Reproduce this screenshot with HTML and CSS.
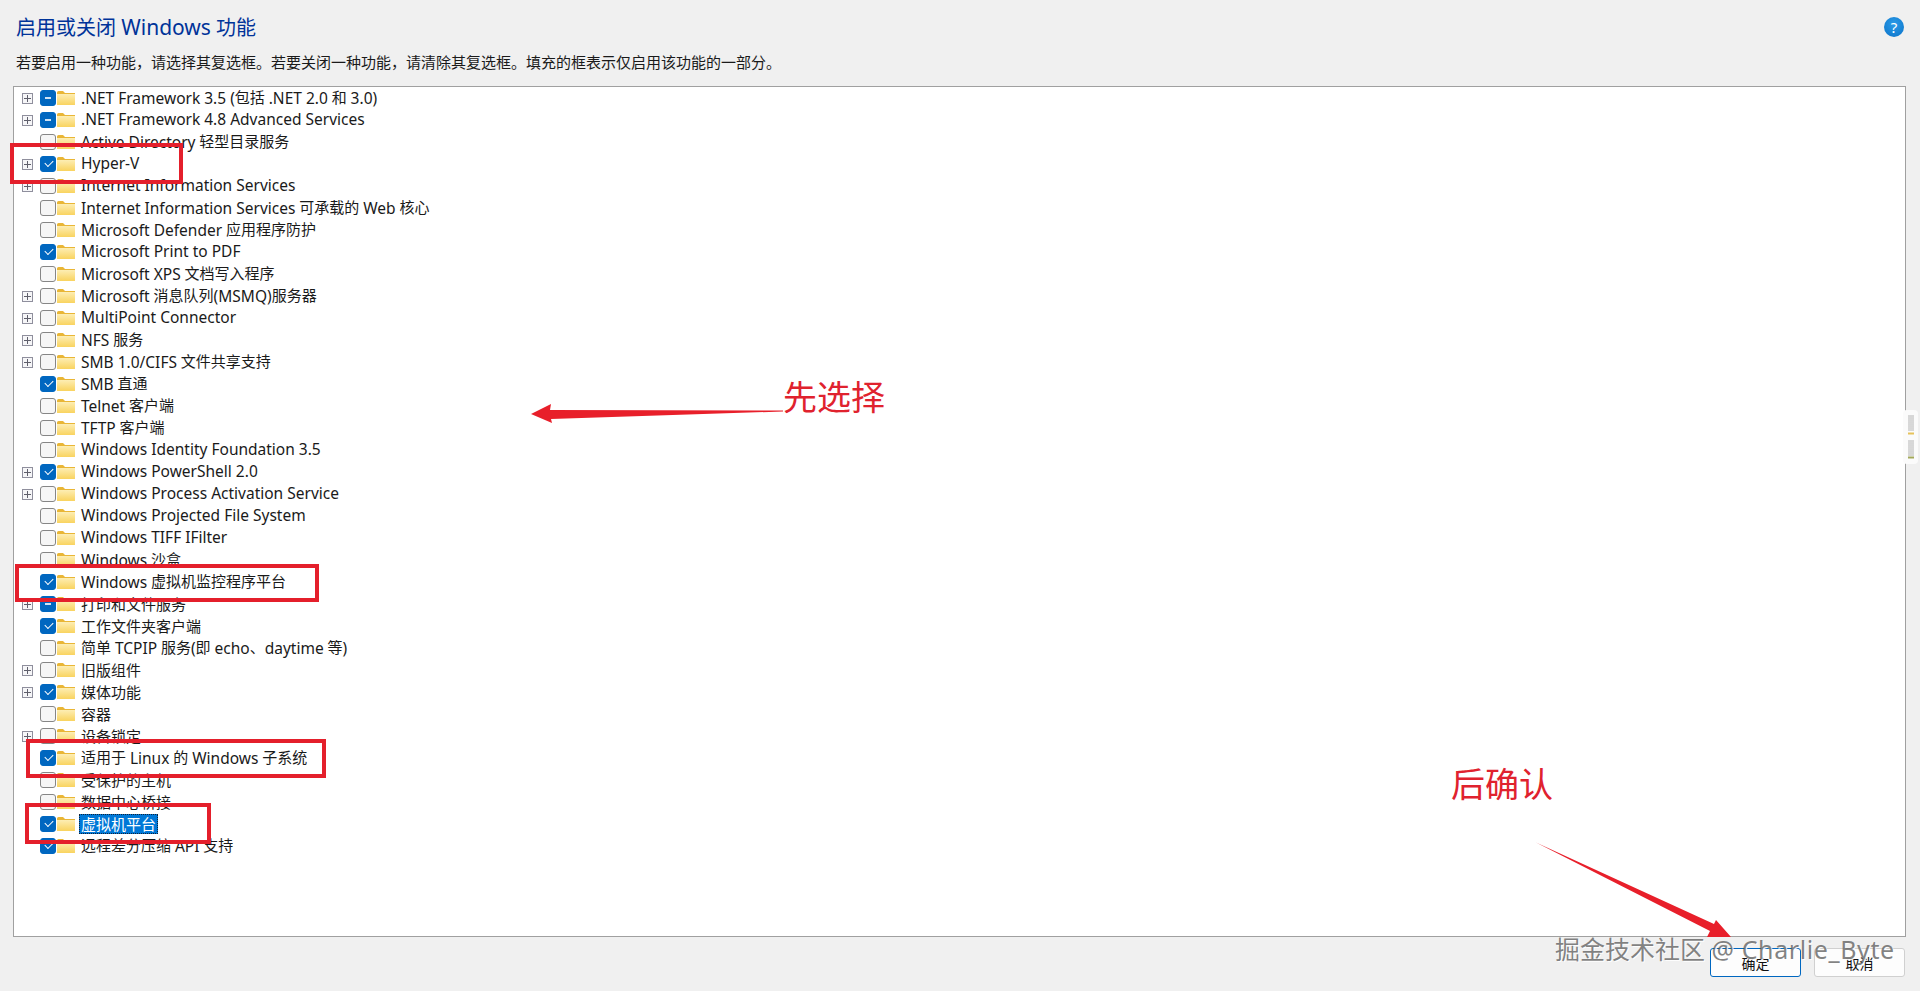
FILE: index.html
```html
<!DOCTYPE html>
<html lang="zh-CN">
<head>
  <meta charset="UTF-8">
  <title>启用或关闭 Windows 功能</title>
  <link rel="stylesheet" href="styles.css">
</head>
<body>
  <svg class="defs" width="0" height="0">
    <defs>
      <linearGradient id="folderFill" x1="0" y1="0" x2="0" y2="1">
        <stop offset="0" stop-color="#fdeeb4"/>
        <stop offset="1" stop-color="#f9d35f"/>
      </linearGradient>
      <symbol id="folder" viewBox="0 0 18 16">
        <path d="M0 2.500Q0 1 1.500 1H6L8 3H18V5H0Z" fill="#e9b636"/>
        <path d="M0 4H18V14.500Q18 15 17.500 15H.5Q0 15 0 14.500Z" fill="url(#folderFill)"/>
      </symbol>
    </defs>
  </svg>

  <header class="top">
    <div class="title-bar">
      <h1>启用或关闭 <span class="en">Windows</span> 功能</h1>
      <span class="help">?</span>
    </div>
    <p class="hint">若要启用一种功能，请选择其复选框。若要关闭一种功能，请清除其复选框。填充的框表示仅启用该功能的一部分。</p>
  </header>

  <ul class="tree">
    <li class="row"><i class="exp"></i><i class="box part"></i><svg class="fold"><use href="#folder"/></svg><span class="label"><span class="en">.NET Framework 3.5 (</span>包括 <span class="en">.NET 2.0</span> 和 <span class="en">3.0)</span></span></li>
    <li class="row"><i class="exp"></i><i class="box part"></i><svg class="fold"><use href="#folder"/></svg><span class="label"><span class="en">.NET Framework 4.8 Advanced Services</span></span></li>
    <li class="row"><i class="noexp"></i><i class="box"></i><svg class="fold"><use href="#folder"/></svg><span class="label"><span class="en">Active Directory</span> 轻型目录服务</span></li>
    <li class="row"><i class="exp"></i><i class="box on"></i><svg class="fold"><use href="#folder"/></svg><span class="label"><span class="en">Hyper-V</span></span></li>
    <li class="row"><i class="exp"></i><i class="box"></i><svg class="fold"><use href="#folder"/></svg><span class="label"><span class="en">Internet Information Services</span></span></li>
    <li class="row"><i class="noexp"></i><i class="box"></i><svg class="fold"><use href="#folder"/></svg><span class="label"><span class="en">Internet Information Services</span> 可承载的 <span class="en">Web</span> 核心</span></li>
    <li class="row"><i class="noexp"></i><i class="box"></i><svg class="fold"><use href="#folder"/></svg><span class="label"><span class="en">Microsoft Defender</span> 应用程序防护</span></li>
    <li class="row"><i class="noexp"></i><i class="box on"></i><svg class="fold"><use href="#folder"/></svg><span class="label"><span class="en">Microsoft Print to PDF</span></span></li>
    <li class="row"><i class="noexp"></i><i class="box"></i><svg class="fold"><use href="#folder"/></svg><span class="label"><span class="en">Microsoft XPS</span> 文档写入程序</span></li>
    <li class="row"><i class="exp"></i><i class="box"></i><svg class="fold"><use href="#folder"/></svg><span class="label"><span class="en">Microsoft</span> 消息队列<span class="en">(MSMQ)</span>服务器</span></li>
    <li class="row"><i class="exp"></i><i class="box"></i><svg class="fold"><use href="#folder"/></svg><span class="label"><span class="en">MultiPoint Connector</span></span></li>
    <li class="row"><i class="exp"></i><i class="box"></i><svg class="fold"><use href="#folder"/></svg><span class="label"><span class="en">NFS</span> 服务</span></li>
    <li class="row"><i class="exp"></i><i class="box"></i><svg class="fold"><use href="#folder"/></svg><span class="label"><span class="en">SMB 1.0/CIFS</span> 文件共享支持</span></li>
    <li class="row"><i class="noexp"></i><i class="box on"></i><svg class="fold"><use href="#folder"/></svg><span class="label"><span class="en">SMB</span> 直通</span></li>
    <li class="row"><i class="noexp"></i><i class="box"></i><svg class="fold"><use href="#folder"/></svg><span class="label"><span class="en">Telnet</span> 客户端</span></li>
    <li class="row"><i class="noexp"></i><i class="box"></i><svg class="fold"><use href="#folder"/></svg><span class="label"><span class="en">TFTP</span> 客户端</span></li>
    <li class="row"><i class="noexp"></i><i class="box"></i><svg class="fold"><use href="#folder"/></svg><span class="label"><span class="en">Windows Identity Foundation 3.5</span></span></li>
    <li class="row"><i class="exp"></i><i class="box on"></i><svg class="fold"><use href="#folder"/></svg><span class="label"><span class="en">Windows PowerShell 2.0</span></span></li>
    <li class="row"><i class="exp"></i><i class="box"></i><svg class="fold"><use href="#folder"/></svg><span class="label"><span class="en">Windows Process Activation Service</span></span></li>
    <li class="row"><i class="noexp"></i><i class="box"></i><svg class="fold"><use href="#folder"/></svg><span class="label"><span class="en">Windows Projected File System</span></span></li>
    <li class="row"><i class="noexp"></i><i class="box"></i><svg class="fold"><use href="#folder"/></svg><span class="label"><span class="en">Windows TIFF IFilter</span></span></li>
    <li class="row"><i class="noexp"></i><i class="box"></i><svg class="fold"><use href="#folder"/></svg><span class="label"><span class="en">Windows</span> 沙盒</span></li>
    <li class="row"><i class="noexp"></i><i class="box on"></i><svg class="fold"><use href="#folder"/></svg><span class="label"><span class="en">Windows</span> 虚拟机监控程序平台</span></li>
    <li class="row"><i class="exp"></i><i class="box part"></i><svg class="fold"><use href="#folder"/></svg><span class="label">打印和文件服务</span></li>
    <li class="row"><i class="noexp"></i><i class="box on"></i><svg class="fold"><use href="#folder"/></svg><span class="label">工作文件夹客户端</span></li>
    <li class="row"><i class="noexp"></i><i class="box"></i><svg class="fold"><use href="#folder"/></svg><span class="label">简单 <span class="en">TCPIP</span> 服务<span class="en">(</span>即 <span class="en">echo</span>、<span class="en">daytime</span> 等<span class="en">)</span></span></li>
    <li class="row"><i class="exp"></i><i class="box"></i><svg class="fold"><use href="#folder"/></svg><span class="label">旧版组件</span></li>
    <li class="row"><i class="exp"></i><i class="box on"></i><svg class="fold"><use href="#folder"/></svg><span class="label">媒体功能</span></li>
    <li class="row"><i class="noexp"></i><i class="box"></i><svg class="fold"><use href="#folder"/></svg><span class="label">容器</span></li>
    <li class="row"><i class="exp"></i><i class="box"></i><svg class="fold"><use href="#folder"/></svg><span class="label">设备锁定</span></li>
    <li class="row"><i class="noexp"></i><i class="box on"></i><svg class="fold"><use href="#folder"/></svg><span class="label">适用于 <span class="en">Linux</span> 的 <span class="en">Windows</span> 子系统</span></li>
    <li class="row"><i class="noexp"></i><i class="box"></i><svg class="fold"><use href="#folder"/></svg><span class="label">受保护的主机</span></li>
    <li class="row"><i class="noexp"></i><i class="box"></i><svg class="fold"><use href="#folder"/></svg><span class="label">数据中心桥接</span></li>
    <li class="row"><i class="noexp"></i><i class="box on"></i><svg class="fold"><use href="#folder"/></svg><span class="label selected">虚拟机平台</span></li>
    <li class="row"><i class="noexp"></i><i class="box on"></i><svg class="fold"><use href="#folder"/></svg><span class="label">远程差分压缩 <span class="en">API</span> 支持</span></li>
  </ul>

  <footer class="actions">
    <button class="btn btn-ok">确定</button>
    <button class="btn">取消</button>
  </footer>

  <!-- annotations drawn on top of the screenshot -->
  <svg class="marks" width="1920" height="991" viewBox="0 0 1920 991">
    <g fill="none" stroke="#e41f2b" stroke-width="4">
      <rect x="12" y="145" width="169" height="37"/>
      <rect x="17" y="566" width="300" height="34"/>
      <rect x="28" y="741" width="296" height="35"/>
      <rect x="27" y="805" width="182" height="37"/>
    </g>
    <path d="M531 414 551 404 550 410 783 410.500 783 411.500 551 419 552 423Z" fill="#e81f2a"/>
    <path d="M1536 842.500 1714 924 1716 920 1731 937 1707 937 1710 931Z" fill="#e81f2a"/>
  </svg>
  <div class="note note-first">先选择</div>
  <div class="note note-then">后确认</div>
  <div class="watermark">掘金技术社区 <span class="wm-en">@ Charlie_Byte</span></div>
  <svg class="side-handle" width="15" height="54" viewBox="0 0 15 54">
    <rect width="15" height="54" rx="4" fill="#fbfbfb"/>
    <path d="M5 6H11M5 8H11M5 10H11M5 12H11M5 14H11M5 16H11M5 18H11M5 20H11M5 31H11M5 33H11M5 35H11M5 37H11M5 39H11M5 41H11M5 43H11M5 45H11" stroke="#b4b4b4"/>
    <path d="M5 23.500H11" stroke="#e6c25a" stroke-width="2"/>
    <path d="M5 47.500H11" stroke="#a3a85a" stroke-width="2"/>
  </svg>
</body>
</html>
```

FILE: styles.css
```css
* {
  box-sizing: border-box;
}
html, body {
  height: 100%;
}
body {
  margin: 0;
  padding: 0 14px 14px 13px;
  height: 991px;
  overflow: hidden;
  display: flex;
  flex-direction: column;
  position: relative;
  background-color: #f0f0f0;
  color: #1a1a1a;
  font-family: "Noto Sans", "Noto Sans CJK SC", sans-serif;
  font-size: 15px;
}
.defs {
  position: absolute;
}
.top {
  padding: 12px 0 0 3px;
  height: 86px;
}
.title-bar {
  display: flex;
  justify-content: space-between;
  align-items: center;
  height: 28px;
}
h1 {
  margin: 0;
  font-size: 20px;
  font-weight: 400;
  color: #003399;
}
h1 .en {
  font-size: 21px;
}
.help {
  width: 20px;
  height: 20px;
  margin: 2px 2px 0 0;
  border-radius: 50%;
  background: radial-gradient(circle at 50% 35%, #2a9be8, #0b72c8);
  color: #fff;
  font-size: 15px;
  line-height: 20px;
  text-align: center;
}
.hint {
  margin: 11px 0 0;
  line-height: 22px;
  white-space: nowrap;
}
.tree {
  flex: 1;
  margin: 0;
  padding: 0;
  list-style: none;
  background-color: #fff;
  border: 1px solid #a0a0a0;
}
.row {
  display: flex;
  align-items: center;
  height: 22px;
  white-space: nowrap;
}
.exp, .noexp {
  width: 11px;
  height: 11px;
  margin-left: 8px;
  flex: none;
}
.exp {
  border: 1px solid #8f8f9d;
  background: linear-gradient(#5f5f6b, #5f5f6b) center / 7px 1px no-repeat,
    linear-gradient(#5f5f6b, #5f5f6b) center / 1px 7px no-repeat,
    #f6f6f8;
}
.box {
  width: 16px;
  height: 16px;
  margin-left: 7px;
  flex: none;
  position: relative;
  border: 1px solid #868686;
  border-radius: 3px;
  background-color: #f6f6f6;
}
.box.on, .box.part {
  border-color: #0067c0;
  background-color: #0067c0;
}
.box.on::after {
  content: "";
  position: absolute;
  left: 3.500px;
  top: 2px;
  width: 7px;
  height: 4px;
  border-left: 1px solid #fff;
  border-bottom: 1px solid #fff;
  transform: translateY(1px) rotate(-45deg);
}
.box.part::after {
  content: "";
  position: absolute;
  left: 4px;
  top: 6px;
  width: 6px;
  height: 2px;
  background-color: #cfe3f5;
}
.fold {
  width: 18px;
  height: 16px;
  margin-left: 1px;
  flex: none;
}
.label {
  margin: 0 0 2px 5px;
  padding: 0 1px;
}
.en {
  font-size: 15.500px;
}
.label .en {
  vertical-align: -1px;
}
.label.selected {
  height: 20px;
  margin: 0 0 0 4px;
  padding: 0 2px;
  line-height: 20px;
  background-color: #0078d7;
  color: #fff;
  outline: 1px dotted #10233a;
  outline-offset: -1px;
}
.actions {
  display: flex;
  justify-content: flex-end;
  gap: 13px;
  padding: 11px 1px 0 0;
}
.btn {
  width: 91px;
  height: 29px;
  padding: 0;
  font: inherit;
  font-size: 14px;
  color: #111;
  background-color: #fdfdfd;
  border: 1px solid #d0d0d0;
  border-radius: 3px;
}
.btn-ok {
  border-color: #0067c0;
}
.marks {
  position: absolute;
  left: 0;
  top: 0;
}
.note {
  position: absolute;
  font-family: "Noto Sans CJK SC", sans-serif;
  font-size: 34px;
  line-height: 40px;
  color: #e0222e;
}
.note-first {
  left: 783px;
  top: 376px;
}
.note-then {
  left: 1451px;
  top: 763px;
}
.watermark {
  position: absolute;
  left: 1555px;
  top: 932px;
  font-size: 25px;
  line-height: 34px;
  white-space: nowrap;
  color: rgba(90, 90, 90, 0.75);
  text-shadow: 1px 1px 0 rgba(255, 255, 255, 0.9);
}
.wm-en {
  letter-spacing: 0.600px;
}
.side-handle {
  position: absolute;
  left: 1903px;
  top: 410px;
}
```
